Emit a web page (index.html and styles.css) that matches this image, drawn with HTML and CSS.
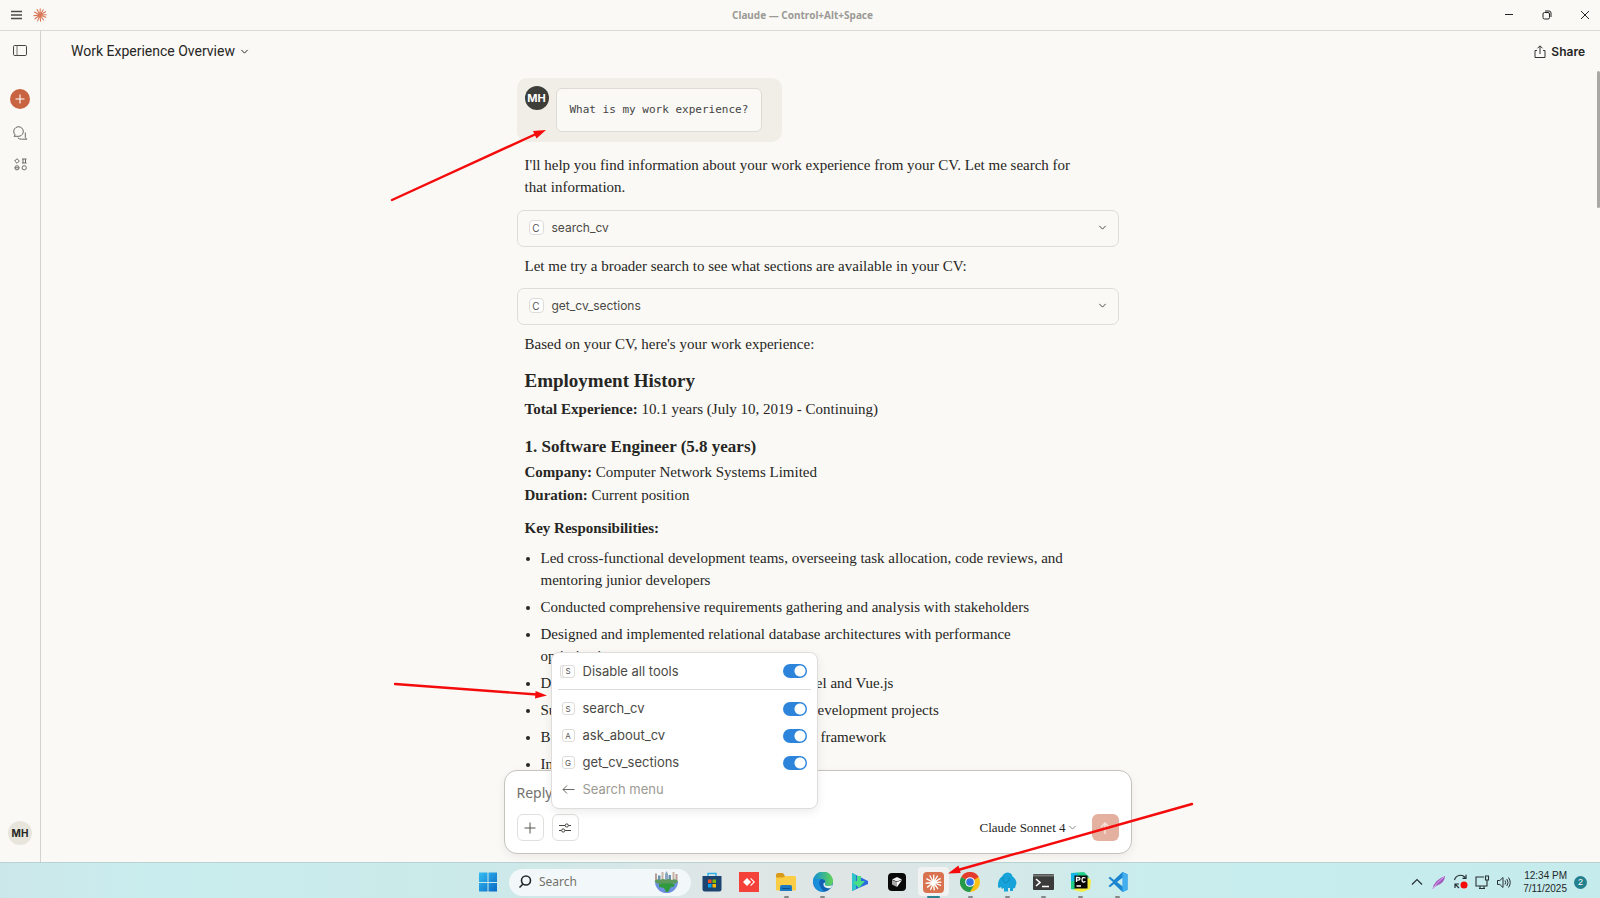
FILE: index.html
```html
<!DOCTYPE html>
<html lang="en">
<head>
<meta charset="utf-8">
<title>Claude</title>
<link rel="stylesheet" href="styles.css">
</head>
<body>
<svg class="defs" aria-hidden="true">
  <symbol id="burst" viewBox="0 0 24 24"><g stroke="currentColor" stroke-width="1.9" stroke-linecap="round"><path d="M12 12 12.4 1.5M12 12 17.5 3M12 12 21.5 6.5M12 12 22.5 11.5M12 12 22 16M12 12 18 20.5M12 12 13 22.5M12 12 8 22M12 12 3.5 18.5M12 12 1.5 13M12 12 2.5 7M12 12 7 2.500"/></g></symbol>
  <symbol id="down" viewBox="0 0 10 10"><path d="M1.500 3.200 5 6.800 8.500 3.200" fill="none" stroke="currentColor" stroke-width="1.100"/></symbol>
</svg>

<div class="desktop">
  <header class="titlebar">
    <button class="plain" aria-label="Menu"><svg width="11" height="10" viewBox="0 0 11 10"><path d="M0 1.500h11M0 5h11M0 8.500h11" stroke="#4a4a46" stroke-width="1.500"/></svg></button>
    <svg class="brand" width="14" height="14"><use href="#burst"/></svg>
    <span class="window-title">Claude — Control+Alt+Space</span>
    <div class="window-controls">
      <button class="plain" aria-label="Minimize"><svg width="10" height="10"><path d="M1 4.500h8" stroke="#222" stroke-width="1"/></svg></button>
      <button class="plain" aria-label="Restore"><svg width="10" height="10" fill="none" stroke="#222"><rect x="1" y="2.500" width="6.500" height="6.500" rx="1.500"/><path d="M3 1h4q2 0 2 2v4"/></svg></button>
      <button class="plain" aria-label="Close"><svg width="10" height="10"><path d="M1 1 9 9M9 1 1 9" stroke="#222"/></svg></button>
    </div>
  </header>

  <div class="app">
    <nav class="sidebar">
      <button class="plain" aria-label="Toggle sidebar"><svg width="14" height="11" fill="none" stroke="#44433f"><rect x=".5" y=".5" width="13" height="10" rx="1.200"/><path d="M4 .5v10" stroke="#77756f"/></svg></button>
      <button class="new-chat" aria-label="New chat"><svg width="10" height="10"><path d="M5 .5v9M.5 5h9" stroke="#fff" stroke-width="1.100"/></svg></button>
      <button class="plain" aria-label="Chats"><svg width="15" height="15" fill="none" stroke="#6b6a65"><path d="M1 10.300 2.200 9A4.800 4.800 0 1 1 6 10.300Z"/><path d="M12.300 6.500v5l1.500 1.700H8.500Q5.800 13.200 4.800 11.800"/></svg></button>
      <button class="plain" aria-label="Projects"><svg width="13" height="13" fill="none" stroke="#6b6a65"><path d="M3 .7 5.300 3 3 5.300.7 3Z"/><path d="M8 1h4.500M8 5h4.500M9 1v4M11.500 1v4"/><circle cx="3" cy="9.800" r="2.100"/><path d="M1 9.800h4"/><circle cx="10.200" cy="9.800" r="2.100"/></svg></button>
      <button class="account">MH</button>
    </nav>

    <main class="main">
      <div class="chat-header">
        <button class="chat-title">Work Experience Overview <svg width="9" height="9"><use href="#down"/></svg></button>
        <button class="share"><svg width="12" height="13" fill="none" stroke="#333"><path d="M3 5.500H1v7h10v-7H9M6 9V1M3.500 3.300 6 .8l2.500 2.500"/></svg>Share</button>
      </div>

      <div class="thread">
        <div class="bubble"><span class="avatar">MH</span><code class="prompt">What is my work experience?</code></div>
        <p class="intro">I'll help you find information about your work experience from your CV. Let me search for that information.</p>
        <button class="tool"><span class="key">C</span>search_cv<svg width="9" height="9"><use href="#down"/></svg></button>
        <p>Let me try a broader search to see what sections are available in your CV:</p>
        <button class="tool"><span class="key">C</span>get_cv_sections<svg width="9" height="9"><use href="#down"/></svg></button>
        <p>Based on your CV, here's your work experience:</p>
        <h2>Employment History</h2>
        <p class="fact"><b>Total Experience:</b> 10.1 years (July 10, 2019 - Continuing)</p>
        <h3>1. Software Engineer (5.8 years)</h3>
        <p class="fact"><b>Company:</b> Computer Network Systems Limited<br><b>Duration:</b> Current position</p>
        <p class="label"><b>Key Responsibilities:</b></p>
        <ul>
          <li>Led cross-functional development teams, overseeing task allocation, code reviews, and mentoring junior developers</li>
          <li>Conducted comprehensive requirements gathering and analysis with stakeholders</li>
          <li>Designed and implemented relational database architectures with performance optimization</li>
          <li>Developed web applications using both Laravel and Vue.js</li>
          <li>Supervised and delivered multiple full-stack development projects</li>
          <li>Built enterprise software with the CodeIgniter framework</li>
          <li>Integrated</li>
        </ul>
      </div>

      <form class="composer">
        <input class="reply" type="text" aria-label="Reply to Claude" placeholder="Reply to Claude...">
        <div class="composer-row">
          <button type="button" class="square" aria-label="Add"><svg width="12" height="12"><path d="M6 .5v11M.5 6h11" stroke="#55544f"/></svg></button>
          <button type="button" class="square" aria-label="Tools"><svg width="12" height="10" fill="none" stroke="#44433f"><path d="M0 2.500h6M9.500 2.500H12M0 7.500h2.500M6 7.500h6"/><circle cx="7.800" cy="2.500" r="1.600"/><circle cx="4.200" cy="7.500" r="1.600"/></svg></button>
          <button type="button" class="model">Claude Sonnet 4<svg width="9" height="9"><use href="#down"/></svg></button>
          <button type="button" class="send" aria-label="Send"><svg width="12" height="14"><path d="M6 13V2M2 6l4-4 4 4" fill="none" stroke="#f7e3dc" stroke-width="1.400"/></svg></button>
        </div>
        <div class="menu">
          <label class="row first"><span class="key stack">S</span>Disable all tools<input type="checkbox" checked></label>
          <label class="row"><span class="key">S</span>search_cv<input type="checkbox" checked></label>
          <label class="row"><span class="key">A</span>ask_about_cv<input type="checkbox" checked></label>
          <label class="row"><span class="key">G</span>get_cv_sections<input type="checkbox" checked></label>
          <button type="button" class="row back"><svg width="13" height="11"><path d="M12.500 5.500H1M5 1.500l-4 4 4 4" fill="none" stroke="#6b6a65"/></svg>Search menu</button>
        </div>
      </form>
      <div class="scrollbar"></div>
    </main>
  </div>

  <footer class="taskbar">
    <div class="apps">
      <button class="task start" aria-label="Start"><svg width="20" height="20"><defs><linearGradient id="win" x2="1" y2="1"><stop stop-color="#35bdf2"/><stop offset="1" stop-color="#0969c5"/></linearGradient></defs><path fill="url(#win)" d="M1 .5h8.500V10H1zM10.500.5H19V10h-8.500zM1 11h8.500v8.500H1zM10.500 11H19v8.500h-8.500z"/></svg></button>
      <label class="search"><svg width="14" height="14" fill="none" stroke="#25292b" stroke-width="1.600"><circle cx="8" cy="5.500" r="4.500"/><path d="M5 9 1.500 12.500"/></svg><input type="text" placeholder="Search" aria-label="Search">
        <svg width="27" height="24" viewBox="0 0 27 24"><path d="M2 3.500h2V12H2zM22.500 4h2v8h-2z" fill="#b79d93"/><path d="M5 5.500h2.500V12H5zM15.500 5h2.500v7h-2.500z" fill="#6c8fb0"/><path d="M8.500 2h2v10h-2zM19.500 2h2v10h-2z" fill="#c8b3a4"/><path d="M12 4l1.500-3L15 4v8h-3z" fill="#8aa6bd"/><path d="M2 11.500a11.500 11.500 0 0 0 23 0Z" fill="#6f8fe0"/><path d="M6 14l4-1.500 9 .5 3 2-2 2h-2l-3 5-2 0-2-4-5-1Z" fill="#2f9a3e"/><path d="M1.500 11q3-3 5.500-1 3-2 6 0 3-2 6 0 3-2 6 1l-2 2.500H4Z" fill="#5b9a5b"/></svg></label>
      <div class="pinned">
      <button class="task" aria-label="Store"><svg width="20" height="20"><path d="M6 5V1.500h8V5" fill="none" stroke="#2ab2e8" stroke-width="1.400"/><path d="M.5 4h19v13q0 2.500-2.500 2.500H3Q.5 19.500.5 17Z" fill="#1c4470"/><path fill="#f25022" d="M6 7.500h3.500V11H6z"/><path fill="#7fba00" d="M10.500 7.500H14V11h-3.500z"/><path fill="#00a4ef" d="M6 12h3.500v3.500H6z"/><path fill="#ffb900" d="M10.500 12H14v3.500h-3.500z"/></svg></button>
      <button class="task" aria-label="AnyDesk"><svg width="20" height="20"><path fill="#f4413a" d="M0 0h20v20H0z"/><path fill="#fff" d="M8 6l4 4-4 4-4-4zM11.200 6.800 12 6l4 4-4 4-.8-.8 3.200-3.200z"/></svg></button>
      <button class="task open" aria-label="File Explorer"><svg width="20" height="20"><path fill="#d99a1c" d="M0 3q0-2 2-2h5l2 3h9v5H0z"/><path fill="#fbcc45" d="M0 5.500h7L9 4h9.500q1.500 0 1.500 1.500v12q0 1-1 1H1q-1 0-1-1z"/><path fill="#1d78c4" d="M4 19v-4q0-2 2-2h8q2 0 2 2v4z"/><path stroke="#0c4f8d" d="M6 16.500h8"/></svg></button>
      <button class="task open" aria-label="Edge"><svg width="20" height="20"><defs><linearGradient id="edge" x2="1"><stop stop-color="#128fd6"/><stop offset="1" stop-color="#62d654"/></linearGradient></defs><circle cx="10" cy="10" r="10" fill="#1160b5"/><path fill="url(#edge)" d="M0 10A10 10 0 0 1 20 9q0 5-5 5-4 0-3-3 1-4-4-4-5 0-8 3"/><path fill="#1a8ddb" d="M0 10q3-4 8-3-3 3-1 7 2 5 6 5.500Q2 21.500 0 10"/><path fill="#dff0ef" d="M12 11q-1 3 3 3 2 0 4.500-1-.5 2-2 3-3 .8-5.500-.8-2.500-2-1-4.700z"/></svg></button>
      <button class="task" aria-label="Media"><svg width="18" height="20"><path fill="#2a6be0" d="M1 1 17 9v3L1 19z"/><path fill="#2fc4c8" d="M1 1 5 3v14l-4 2z"/><path fill="#49dd84" d="M6 4h4v5h4l-6 7-6-6 4-1z"/></svg></button>
      <button class="task" aria-label="Cursor"><svg width="18" height="18"><rect width="18" height="18" rx="4" fill="#090909"/><path fill="#eee" d="m9 4 5 2.500-5 2-5-2z"/><path fill="#aaa" d="m4 7 5 2v5l-5-2.500z"/><path fill="#fff" d="m14 7-5 2v5z"/></svg></button>
      <button class="task open active" aria-label="Claude"><span class="claude-icon"><svg width="17" height="17"><use href="#burst"/></svg></span></button>
      <button class="task open" aria-label="Chrome"><svg width="20" height="20"><circle cx="10" cy="10" r="10" fill="#fbc116"/><path fill="#e33b2e" d="M10 10 1.300 5A10 10 0 0 1 18.700 5Z"/><path fill="#25994b" d="M10 10 1.300 5A10 10 0 0 0 10 20l4-7Z"/><circle cx="10" cy="10" r="4.800" fill="#fff"/><circle cx="10" cy="10" r="3.800" fill="#2f73e4"/></svg></button>
      <button class="task open" aria-label="Database"><svg width="20" height="20"><path fill="#17a3d9" d="M5 4.500Q7 .5 11 .5q4 .5 4.500 4 3.500 2 4 6.500l-1.500 5-2 .5v2.500h-3V16h-2v3.500H7V16l-2 1-1-2-2 1q-1.500-1-1-4 .5-5.500 4-7.500z"/><path fill="none" stroke="#0c86ba" stroke-width=".8" d="M6.500 5q-1.500 5 2 6 4-1 4-5.500"/></svg></button>
      <button class="task open" aria-label="Terminal"><svg width="21" height="16"><rect width="21" height="16" rx="1" fill="#3b3b3b"/><path d="M0 1.500h21" stroke="#777" stroke-width="2"/><path d="m3 5 4 3.500L3 12M9 12.500h7" fill="none" stroke="#fff" stroke-width="1.600"/></svg></button>
      <button class="task open" aria-label="PyCharm"><svg width="20" height="20"><path fill="#20d089" d="M0 1 13 0l5 5-5 14-13-2z"/><path fill="#f4eb3a" d="m14 4 6 4-1 9-8 3-8-2z"/><path fill="#14b8e8" d="M0 1h7v8H0z"/><path fill="#080808" d="M3.500 3.500h13v13h-13z"/><path fill="none" stroke="#fff" stroke-width="1.300" d="M5.500 10V5.500H7q2 0 2 1.300T7 8.200H5.500M14.500 6q-3.500-1.500-3.500 1.800t3.500 1.700M5.500 14H10"/></svg></button>
      <button class="task open" aria-label="Visual Studio Code"><svg width="20" height="20"><path fill="#1b86cf" d="m14.500 0 5 2.300v15.400l-5 2.300L6 12l-4 3.200L.5 14 5 10 .5 6 2 4.800 6 8Zm.3 5.500L9 10l5.800 4.500Z"/><path fill="#42aef0" d="m14.500 0 5 2.300v15.400l-5 2.300z"/></svg></button>
      </div>
    </div>
    <div class="tray">
      <svg width="12" height="8"><path d="M1 6.500 6 1.500l5 5" fill="none" stroke="#273033" stroke-width="1.200"/></svg>
      <svg width="14" height="15"><path d="M.5 14Q2 5 13 1q0 7-9 10Z" fill="#a35bc0"/><path d="M.5 14Q5 7 12 2" stroke="#d9a7ea" fill="none"/></svg>
      <svg width="15" height="16"><path d="M1.500 6A6 6 0 0 1 12 3.500M13 .8v3.500H9.500M2 14v-4h4M2 10l4 4" fill="none" stroke="#273033" stroke-width="1.200"/><circle cx="11" cy="11" r="3.500" fill="#f80b0b"/></svg>
      <svg width="15" height="15" fill="none" stroke="#273033" stroke-width="1.100"><path d="M9 2H1v9h11V8M4 13.500h6M5 11v2M9 11v2M12 5v3"/><path d="M10.500 1h3v4h-3z"/></svg>
      <svg width="14" height="13" fill="none" stroke="#273033"><path d="M.5 4.500h2.300L6 1.500v10L2.800 8.500H.5zM8 4.500q1.300 2 0 4M9.800 3q2.500 3.500 0 7M11.500 1.500q3.500 5 0 10"/></svg>
      <time>12:34 PM<br>7/11/2025</time>
      <span class="count">2</span>
    </div>
  </footer>

  <svg class="notes" viewBox="0 0 1600 898" aria-hidden="true">
    <g stroke="#f40b0b" stroke-width="2.400" stroke-linecap="round"><path d="M392 200 536 134M395 684l142 10.500M1192 804 958 870"/></g>
    <g fill="#f40b0b"><path d="m546 130-9.500 8.500-3.500-7.500zM547 695.500l-12 3 .6-7.500zM948 873.500l10.500-8 2.200 7.500z"/></g>
  </svg>
</div>
</body>
</html>
```
FILE: styles.css
```css
* { box-sizing: border-box; }
body { margin: 0; font-family: Inter, "Liberation Sans", sans-serif; color: #262624; }
button { border: 0; padding: 0; background: none; font: inherit; color: inherit; }
svg { display: block; flex: none; }
.defs { position: absolute; width: 0; height: 0; }
.plain { display: grid; place-items: center; }

.desktop { position: relative; display: flex; flex-direction: column; height: 100vh; overflow: hidden; background: #faf9f5; }
.notes { position: absolute; inset: 0; width: 100%; height: 100%; pointer-events: none; }

.titlebar { display: grid; grid-template-columns: 11px 14px 1fr auto; gap: 11px; align-items: center; height: 31px; padding: 0 10px 0 11px; border-bottom: 1px solid #dad9d4; }
.brand { color: #d97757; }
.window-title { padding-left: 54px; text-align: center; font: bold 10px/14px "Noto Sans", sans-serif; color: #9b9a96; }
.window-controls { display: flex; gap: 28px; }

.app { flex: 1; min-height: 0; display: flex; }
.sidebar { width: 41px; border-right: 1px solid #d3d2cd; display: flex; flex-direction: column; align-items: center; padding: 14px 0 17px; }
.new-chat { display: grid; place-items: center; width: 20px; height: 20px; margin: 33px 0 17px; border-radius: 50%; background: #c96442; }
.sidebar .plain + .plain { margin-top: 17px; }
.account { width: 24px; height: 24px; margin-top: auto; border-radius: 50%; background: #e8e6dc; font-size: 10px; font-weight: 700; }

.main { position: relative; flex: 1; min-width: 0; display: flex; flex-direction: column; align-items: center; padding: 0 6px 8px 0; }
.chat-header { align-self: stretch; display: flex; justify-content: space-between; align-items: center; height: 40px; padding: 0 9px 0 30px; }
.chat-title, .share { display: flex; align-items: center; gap: 5px; }
.chat-title { font: 14px/20px Roboto, sans-serif; }
.share { font-size: 12px; font-weight: 600; }
.scrollbar { position: absolute; right: 0; top: 40px; width: 3px; height: 137px; border-radius: 2px; background: #a9a8a5; }

.thread { flex: 1; min-height: 0; overflow: hidden; width: 602px; padding-top: 7px; font: 15px/22px "Liberation Serif", serif; }
.bubble { display: flex; gap: 7px; width: 265px; height: 64px; padding: 8px; border-radius: 10px; background: #f0eee6; }
.avatar { display: grid; place-items: center; width: 24px; height: 24px; border-radius: 50%; background: #3d3d3a; color: #fff; font: bold 11px/1 Inter, sans-serif; }
.prompt { height: 44px; margin-top: 2px; padding: 0 13px; border: 1px solid #dddbd3; border-radius: 6px; background: #faf9f6; font: 11px/42px "DejaVu Sans Mono", monospace; color: #444; }
p, h2, h3, ul { margin: 0; padding: 0 8px; }
.thread > p { margin: 8px 0 11px; }
.thread > .intro { margin: 12px 0; padding-right: 40px; }
.tool { display: flex; align-items: center; gap: 8px; width: 100%; height: 37px; padding: 0 11px 2px; border: 1px solid #deddd8; border-radius: 7px; font: 12px/16px Inter, sans-serif; color: #4a4945; }
.tool svg { margin-left: auto; }
.key { display: grid; place-items: center; width: 15px; height: 15px; border: 1px solid #dddcd8; border-radius: 4px; background: #fff; font: 10px/1 Inter, sans-serif; color: #55544f; }
h2 { margin-top: 14px; font-size: 19px; line-height: 24px; }
h3 { margin-top: 14px; font-size: 17px; line-height: 24px; }
.thread > .fact { margin: 5px 0 0; line-height: 23px; }
.thread > h3 + .fact { margin-top: 2px; }
.thread > .label { margin: 10px 0 8px; }
ul { padding: 0 40px 0 24px; }
li { margin-bottom: 5px; }

.composer { position: relative; width: 628px; padding: 12px; border: 1px solid #c4c3be; border-radius: 13px; background: #fff; box-shadow: 0 3px 10px #00000010; }
.reply { display: block; width: 100%; height: 20px; border: 0; padding: 0; background: none; font: 14px/20px "Noto Sans", sans-serif; }
.reply::placeholder, .search input::placeholder { color: #73726c; opacity: 1; }
.composer-row { display: flex; align-items: center; gap: 8px; margin-top: 11px; }
.square, .send { display: grid; place-items: center; width: 27px; height: 27px; border-radius: 6px; }
.square { border: 1px solid #e0dfdb; }
.send { margin-left: 7px; background: #e4b1a1; }
.model { display: flex; align-items: center; gap: 2px; margin-left: auto; font: 13px/20px "Liberation Serif", serif; }
.model svg { color: #8a8983; }

.menu { position: absolute; left: 46px; bottom: 44px; width: 267px; padding: 5px 6px; border: 1px solid #dedddb; border-radius: 8px; background: #fff; box-shadow: 0 3px 10px #00000014; font: 13px/27px Inter, sans-serif; color: #4a4945; }
.row { display: flex; align-items: center; gap: 8px; width: 100%; height: 27px; padding: 0 4px; }
.row .key { width: 13px; height: 13px; border-radius: 3px; font-size: 8px; }
.row .stack { box-shadow: -2px 0 0 -1px #fff, -2px 0 0 0 #dddcd8; }
.first { height: 32px; margin-bottom: 5px; border-bottom: 1px solid #dedddb; padding-bottom: 5px; }
.back { color: #9c9a92; }
.row input { appearance: none; width: 24px; height: 14px; margin: 0 0 0 auto; border-radius: 7px; background: radial-gradient(circle at 17px 7px, #fff 5px, #2c84db 6px); }

.taskbar { display: grid; grid-template-columns: 1fr auto; height: 36px; border-top: 1px solid #b9d3d4; background: linear-gradient(90deg, #cce7ea 0, #c9edee 10%, #cbe9e9 30%, #dfe6e6 45%, #dfe5e5 55%, #c9eded 72%, #c5ebed 100%); }
.apps { display: flex; align-items: center; padding-left: 470px; }
.pinned { display: flex; width: 442px; }
.pinned .task { flex: 1; }
.task { position: relative; display: grid; place-items: center; height: 35px; padding-top: 3px; }
.start { width: 36px; }
.open::after { content: ""; position: absolute; bottom: 0; left: 16px; width: 5px; height: 2px; border-radius: 1px; background: #85898a; }
.active::before { content: ""; position: absolute; inset: 4px 3px 2px; border-radius: 4px; background: #f0f3f2; }
.active::after { left: 12px; width: 13px; background: #2b8491; }
.claude-icon { position: relative; display: grid; place-items: center; width: 21px; height: 21px; border-radius: 4px; background: #d9734f; color: #fff; }
.search { display: flex; align-items: center; width: 182px; height: 27px; margin: 3px 3px 0; padding: 0 11px 0 9px; border-radius: 14px; background: #f2f8f9; }
.search input { flex: 1; min-width: 0; border: 0; padding: 0 0 0 7px; background: none; font: 12px/16px "Noto Sans", sans-serif; }
.tray { display: flex; align-items: center; gap: 7px; padding: 3px 13px 0 0; font: 10px/13px "Liberation Sans", sans-serif; color: #1f2729; }
.tray svg:first-child { margin-right: 2px; }
.tray time { margin-left: 5px; text-align: right; }
.count { display: grid; place-items: center; width: 13px; height: 13px; border-radius: 50%; background: #25808e; color: #fff; font-size: 9px; }
```
